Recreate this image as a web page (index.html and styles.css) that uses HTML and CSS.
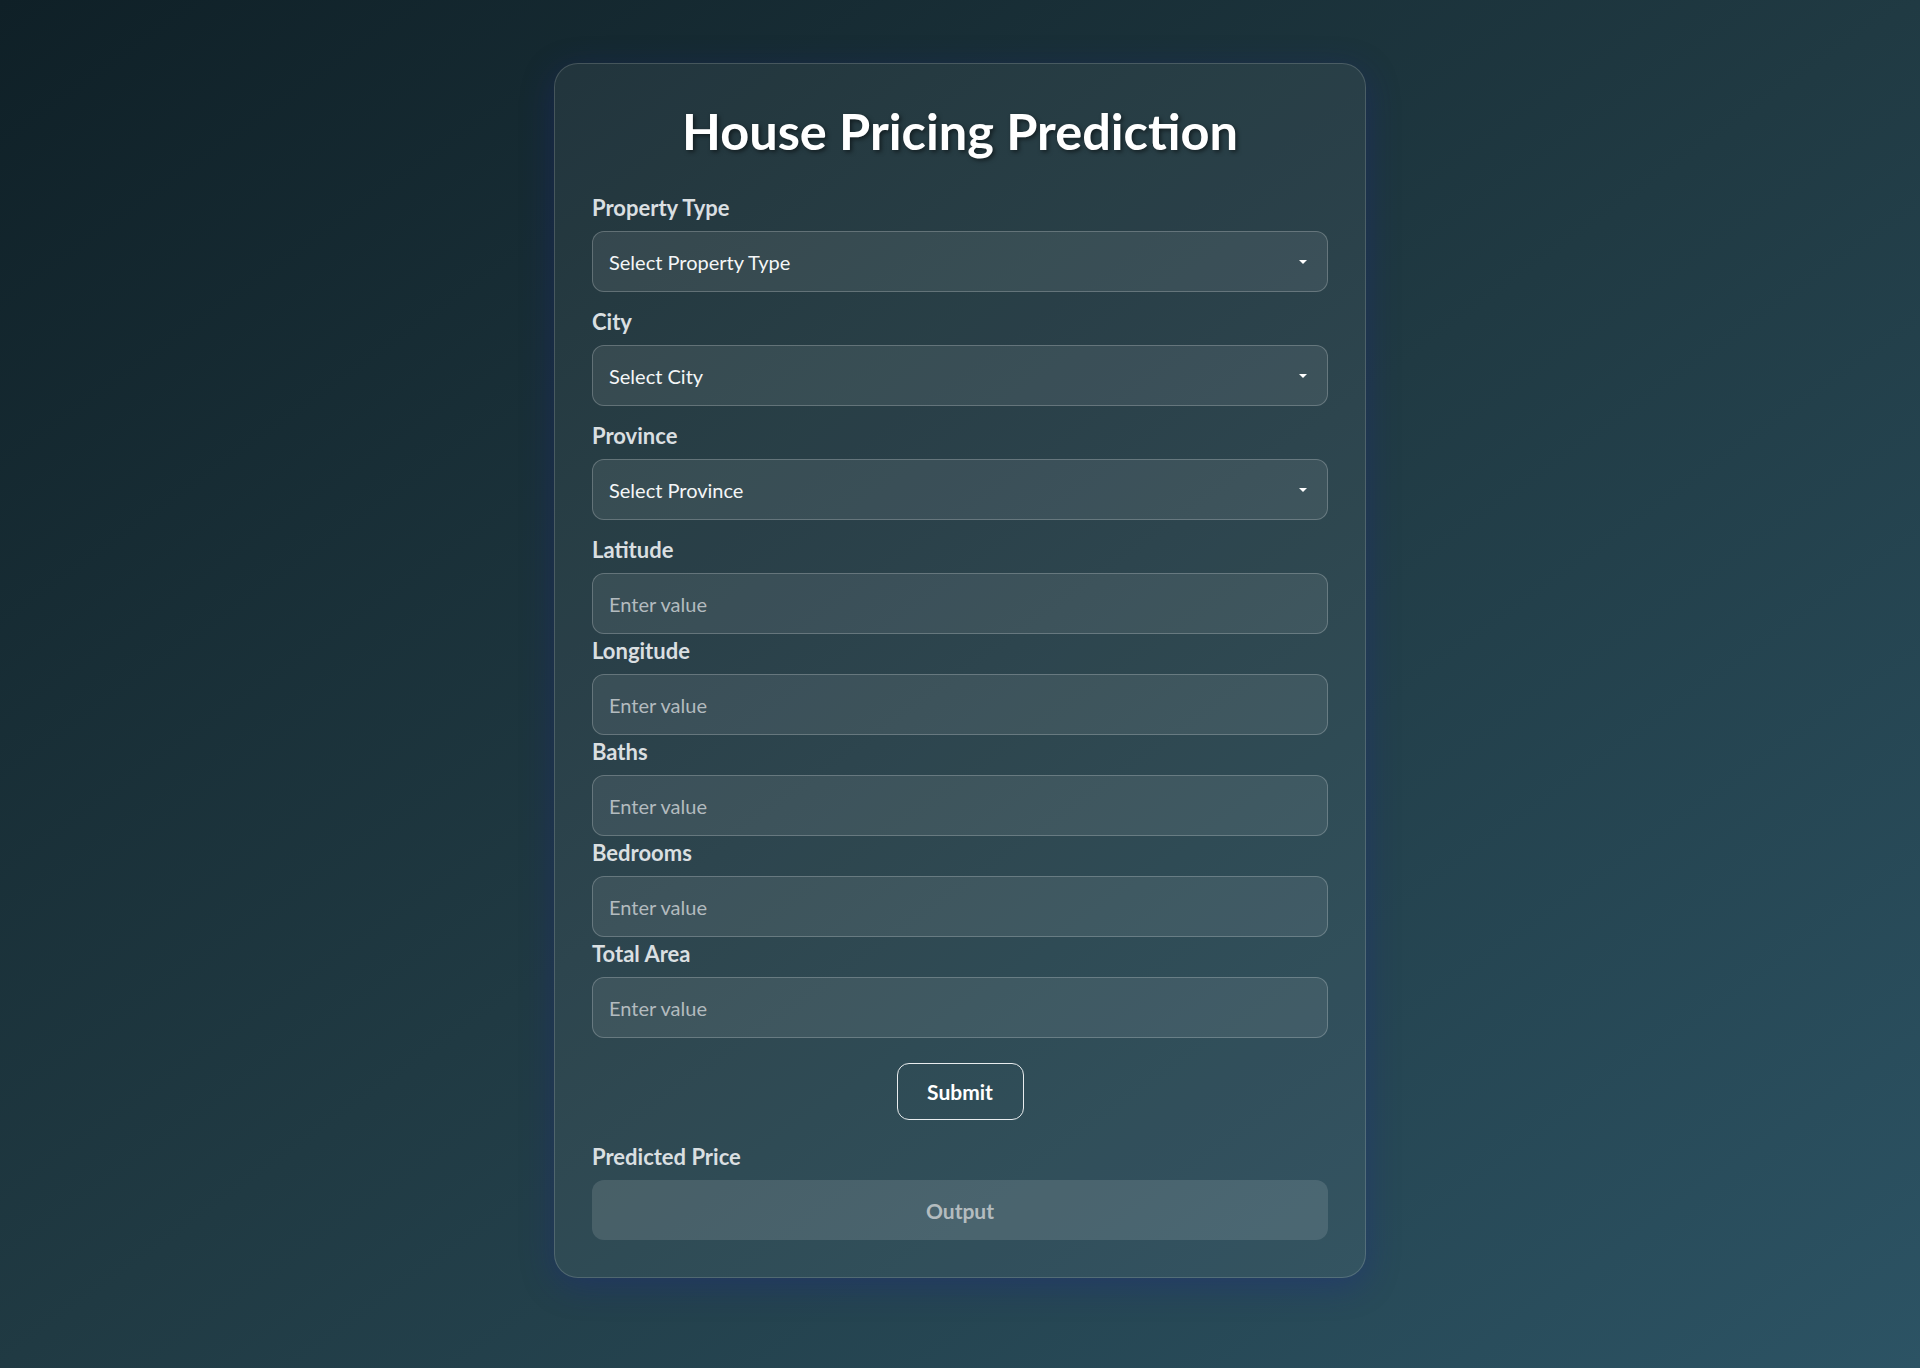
FILE: index.html
```html
<!DOCTYPE html>
<html lang="en">
<head>
<meta charset="utf-8">
<title>House Pricing Prediction</title>
<link rel="stylesheet" href="styles.css">
</head>
<body>
<main class="card">
  <h1 class="title">House Pricing Prediction</h1>

  <div class="group group-select">
    <label class="label" for="ptype">Property Type</label>
    <div class="select-wrap">
      <select id="ptype" class="field select"><option>Select Property Type</option></select>
    </div>
  </div>

  <div class="group group-select">
    <label class="label" for="city">City</label>
    <div class="select-wrap">
      <select id="city" class="field select"><option>Select City</option></select>
    </div>
  </div>

  <div class="group group-select">
    <label class="label" for="prov">Province</label>
    <div class="select-wrap">
      <select id="prov" class="field select"><option>Select Province</option></select>
    </div>
  </div>

  <div class="group">
    <label class="label" for="lat">Latitude</label>
    <input id="lat" class="field" type="text" placeholder="Enter value">
  </div>
  <div class="group">
    <label class="label" for="lon">Longitude</label>
    <input id="lon" class="field" type="text" placeholder="Enter value">
  </div>
  <div class="group">
    <label class="label" for="baths">Baths</label>
    <input id="baths" class="field" type="text" placeholder="Enter value">
  </div>
  <div class="group">
    <label class="label" for="beds">Bedrooms</label>
    <input id="beds" class="field" type="text" placeholder="Enter value">
  </div>
  <div class="group">
    <label class="label" for="area">Total Area</label>
    <input id="area" class="field" type="text" placeholder="Enter value">
  </div>

  <div class="actions">
    <button class="submit" type="button">Submit</button>
  </div>

  <div class="result">
    <div class="label">Predicted Price</div>
    <div class="output">Output</div>
  </div>
</main>
</body>
</html>
```

FILE: styles.css
```css
* { box-sizing: border-box; }

html, body {
  margin: 0;
  padding: 0;
}

body {
  min-height: 1368px;
  background: linear-gradient(to bottom right, #0f2027 0%, #203a43 50%, #2c5364 100%);
  font-family: Lato, "Open Sans", sans-serif;
  color: #ffffff;
  display: flex;
  justify-content: center;
  align-items: flex-start;
}

.card {
  margin-top: 63px;
  width: 812px;
  padding: 38px 37px 37px;
  border-radius: 24px;
  background: rgba(255, 255, 255, 0.06);
  border: 1px solid rgba(255, 255, 255, 0.16);
  box-shadow: 0 8px 32px 0 rgba(31, 38, 135, 0.37);
}

.title {
  margin: 0 0 33px;
  font-size: 50.5px;
  line-height: 58px;
  font-weight: 700;
  text-align: center;
  color: #ffffff;
  text-shadow: 2px 2px 4px rgba(0, 0, 0, 0.5);
}

.group {
  display: flex;
  flex-direction: column;
  margin-bottom: 2px;
}

.group-select {
  margin-bottom: 15px;
}

.label {
  display: block;
  font-size: 22px;
  line-height: 30px;
  font-weight: 700;
  color: #dadfe1;
  margin-bottom: 8px;
}

.field {
  width: 100%;
  height: 61px;
  padding: 0 16px;
  border-radius: 12px;
  border: 1px solid rgba(255, 255, 255, 0.22);
  background: rgba(255, 255, 255, 0.08);
  color: #ffffff;
  font-family: inherit;
  font-size: 20px;
  outline: none;
}

.field::placeholder {
  color: #b3bbbf;
}

.select-wrap {
  position: relative;
}

.select {
  appearance: none;
  -webkit-appearance: none;
  color: #f4f6f7;
  cursor: pointer;
}

.select option {
  color: #000;
}

.select-wrap::after {
  content: "";
  position: absolute;
  right: 21px;
  top: 29px;
  width: 0;
  height: 0;
  border-left: 4px solid transparent;
  border-right: 4px solid transparent;
  border-top: 4px solid #ffffff;
  pointer-events: none;
}

.actions {
  display: flex;
  justify-content: center;
  margin-top: 25px;
  margin-bottom: 22px;
}

.submit {
  width: 127px;
  height: 57px;
  border-radius: 12px;
  border: 1px solid #e8ecee;
  background: transparent;
  color: #ffffff;
  font-family: inherit;
  font-size: 21px;
  font-weight: 700;
  cursor: pointer;
}

.output {
  height: 60px;
  border-radius: 12px;
  background: rgba(255, 255, 255, 0.12);
  display: flex;
  align-items: center;
  justify-content: center;
  font-size: 21px;
  font-weight: 700;
  color: #b4bcbf;
}
```
